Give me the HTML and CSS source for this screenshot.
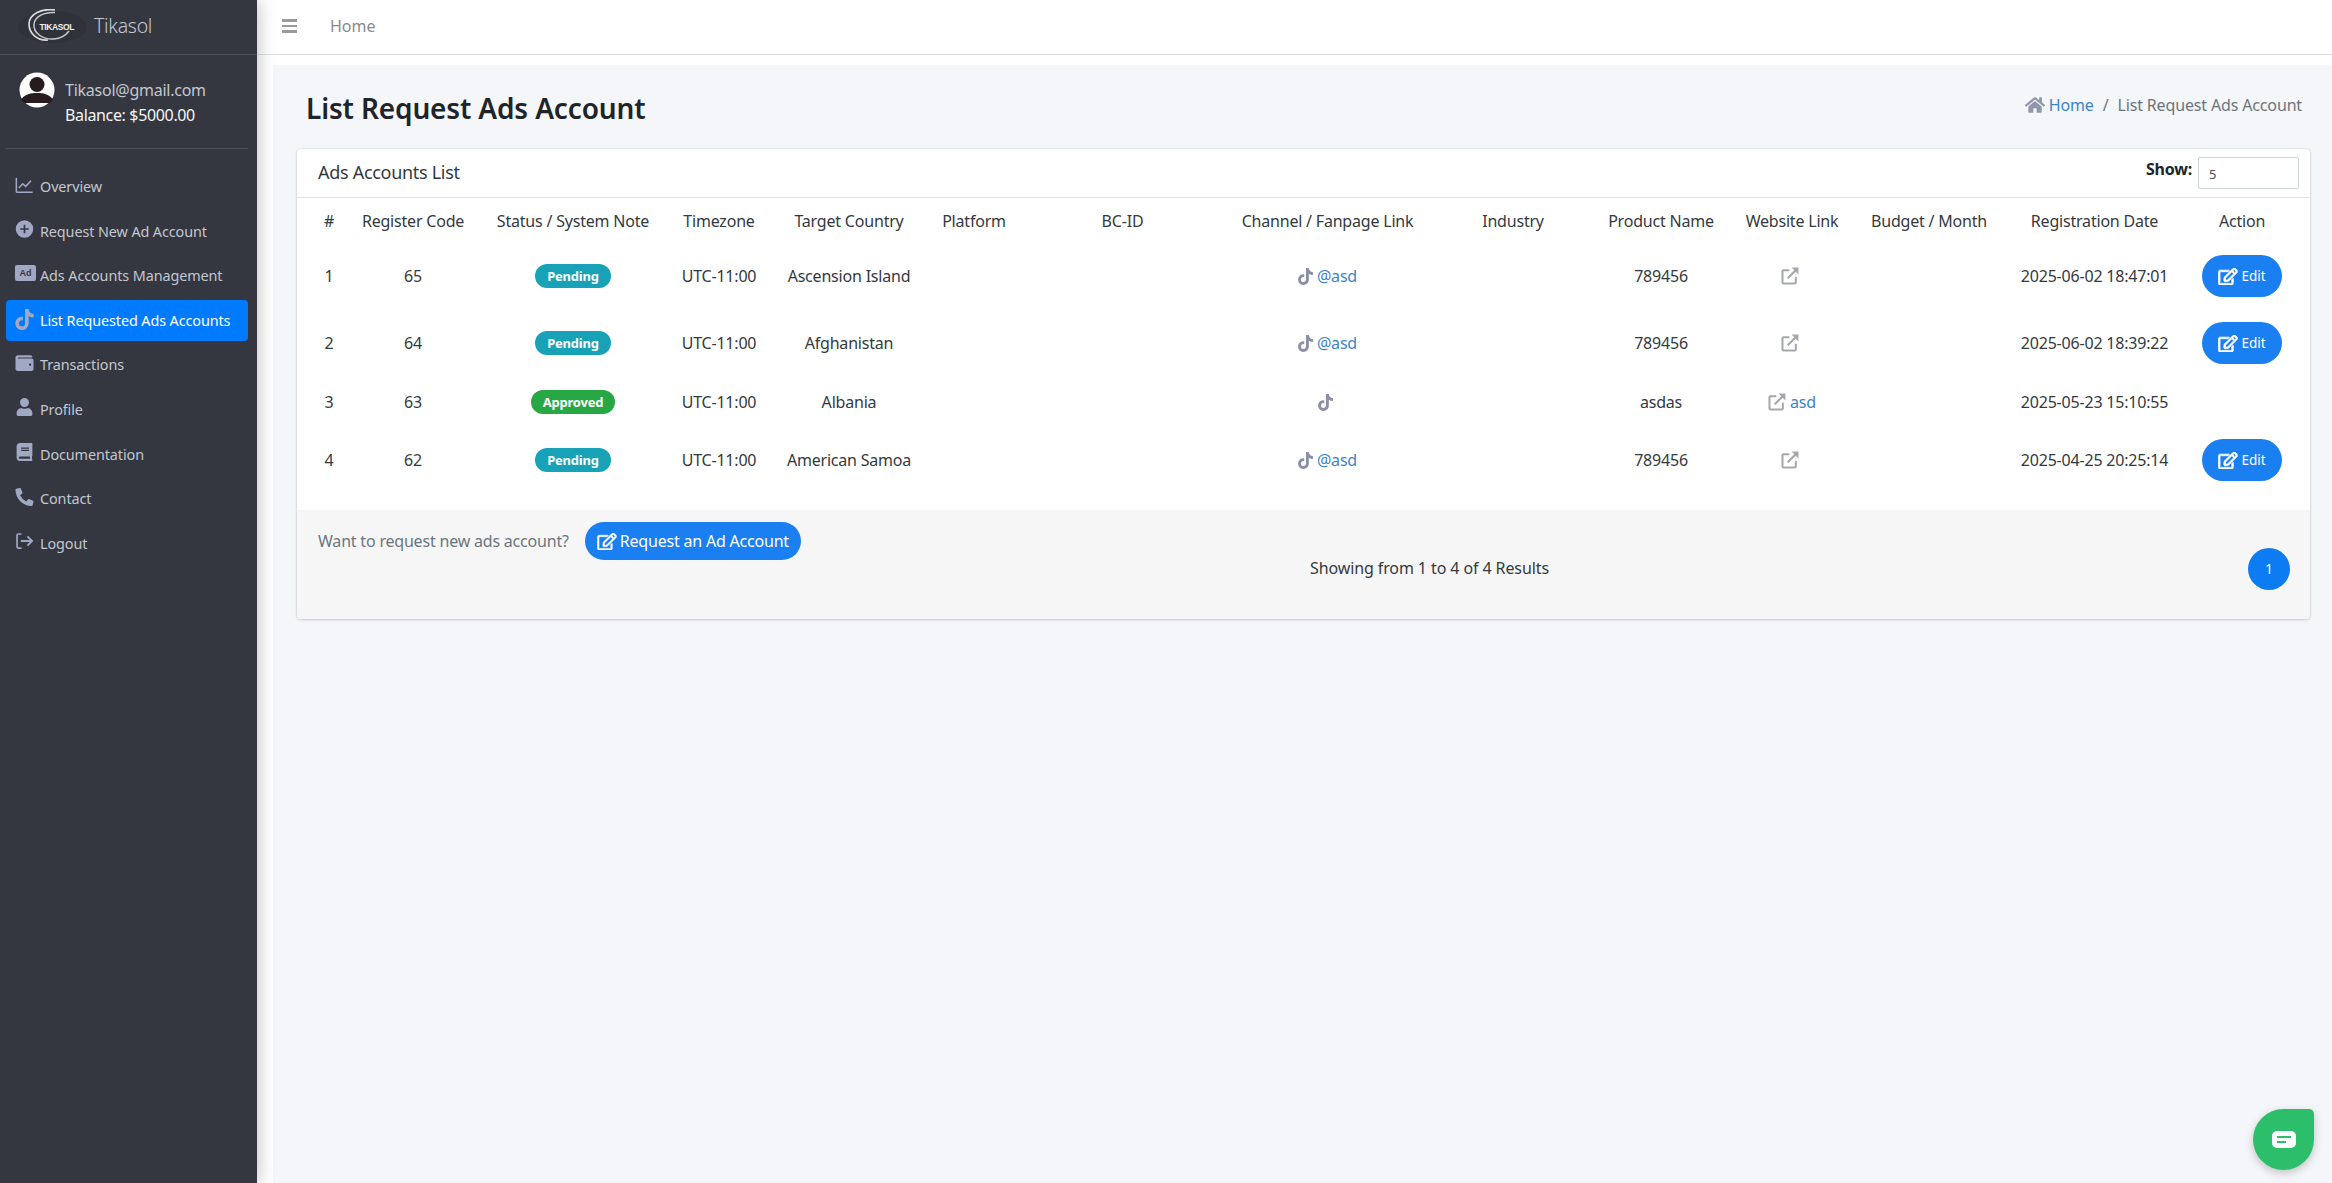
FILE: index.html
```html
<!DOCTYPE html>
<html lang="en">
<head>
<meta charset="utf-8">
<title>List Request Ads Account</title>
<link rel="stylesheet" href="styles.css">
</head>
<body>
<svg class="sprite" xmlns="http://www.w3.org/2000/svg">
  <symbol id="i-chart" viewBox="0 0 512 512"><path d="M24 48v392a24 24 0 0 0 24 24h440" fill="none" stroke="currentColor" stroke-width="44"/><path d="M96 340l110-120 84 74 150-160" fill="none" stroke="currentColor" stroke-width="44"/></symbol>
  <symbol id="i-plus" viewBox="0 0 512 512"><path fill-rule="evenodd" d="M256 8a248 248 0 1 0 0 496 248 248 0 0 0 0-496zM232 136h48v96h96v48h-96v96h-48v-96h-96v-48h96z" fill="currentColor"/></symbol>
  <symbol id="i-tiktok" viewBox="0 0 448 512"><path fill="currentColor" d="M448,209.91a210.06,210.06,0,0,1-122.77-39.25V349.38A162.55,162.55,0,1,1,185,188.31V278.2a74.62,74.62,0,1,0,52.23,71.18V0l88,0a121.18,121.18,0,0,0,1.86,22.17h0A122.18,122.18,0,0,0,381,102.39a121.43,121.43,0,0,0,67,20.14Z"/></symbol>
  <symbol id="i-wallet" viewBox="0 0 512 512"><path fill="currentColor" d="M461.2 128H80c-8.84 0-16-7.16-16-16s7.16-16 16-16h384c8.84 0 16-7.16 16-16 0-26.51-21.49-48-48-48H64C28.65 32 0 60.65 0 96v320c0 35.35 28.65 64 64 64h397.2c28.02 0 50.8-21.53 50.8-48V176c0-26.47-22.78-48-50.8-48zM416 336c-17.67 0-32-14.33-32-32s14.33-32 32-32 32 14.33 32 32-14.33 32-32 32z"/></symbol>
  <symbol id="i-user" viewBox="0 0 448 512"><path fill="currentColor" d="M224 256c70.7 0 128-57.3 128-128S294.7 0 224 0 96 57.3 96 128s57.3 128 128 128zm89.6 32h-16.7c-22.2 10.2-46.9 16-72.9 16s-50.6-5.8-72.9-16h-16.7C60.2 288 0 348.2 0 422.4V464c0 26.5 21.5 48 48 48h352c26.5 0 48-21.5 48-48v-41.6c0-74.2-60.2-134.4-134.4-134.4z"/></symbol>
  <symbol id="i-book" viewBox="0 0 448 512"><path fill="currentColor" d="M448 360V24c0-13.3-10.7-24-24-24H96C43 0 0 43 0 96v320c0 53 43 96 96 96h328c13.3 0 24-10.7 24-24v-16c0-7.5-3.5-14.3-8.9-18.7-4.2-15.4-4.2-59.3 0-74.7 5.4-4.3 8.9-11.1 8.9-18.6zM128 134c0-3.3 2.7-6 6-6h212c3.3 0 6 2.7 6 6v20c0 3.3-2.7 6-6 6H134c-3.3 0-6-2.7-6-6v-20zm0 64c0-3.3 2.7-6 6-6h212c3.3 0 6 2.7 6 6v20c0 3.3-2.7 6-6 6H134c-3.3 0-6-2.7-6-6v-20zm253.4 250H96c-17.7 0-32-14.3-32-32 0-17.6 14.4-32 32-32h285.4c-1.9 17.1-1.9 46.9 0 64z"/></symbol>
  <symbol id="i-phone" viewBox="0 0 512 512"><path fill="currentColor" d="M497.39 361.8l-112-48a24 24 0 0 0-28 6.9l-49.6 60.6A370.66 370.66 0 0 1 130.6 204.11l60.6-49.6a23.94 23.94 0 0 0 6.9-28l-48-112A24.16 24.16 0 0 0 122.6.61l-104 24A24 24 0 0 0 0 48c0 256.5 207.9 464 464 464a24 24 0 0 0 23.4-18.6l24-104a24.29 24.29 0 0 0-14.01-27.6z"/></symbol>
  <symbol id="i-logout" viewBox="0 0 512 512"><path d="M170 56H80a36 36 0 0 0-36 36v328a36 36 0 0 0 36 36h90" fill="none" stroke="currentColor" stroke-width="48"/><path d="M152 256h320M340 124l132 132-132 132" fill="none" stroke="currentColor" stroke-width="52"/></symbol>
  <symbol id="i-home" viewBox="0 0 576 512"><path fill="currentColor" d="M280.37 148.26L96 300.11V464a16 16 0 0 0 16 16l112.06-.29a16 16 0 0 0 15.92-16V368a16 16 0 0 1 16-16h64a16 16 0 0 1 16 16v95.64a16 16 0 0 0 16 16.05L464 480a16 16 0 0 0 16-16V300L295.67 148.26a12.19 12.19 0 0 0-15.3 0zM571.6 251.47L488 182.56V44.05a12 12 0 0 0-12-12h-56a12 12 0 0 0-12 12v72.61L318.47 43a48 48 0 0 0-61 0L4.34 251.47a12 12 0 0 0-1.6 16.9l25.5 31A12 12 0 0 0 45.15 301l235.22-193.74a12.19 12.19 0 0 1 15.3 0L530.9 301a12 12 0 0 0 16.9-1.6l25.5-31a12 12 0 0 0-1.7-16.93z"/></symbol>
  <symbol id="i-edit" viewBox="0 0 576 512"><path fill="currentColor" d="M402.3 344.9l32-32c5-5 13.7-1.5 13.7 5.7V464c0 26.5-21.5 48-48 48H48c-26.5 0-48-21.5-48-48V112c0-26.5 21.5-48 48-48h273.5c7.1 0 10.7 8.6 5.7 13.7l-32 32c-1.5 1.5-3.5 2.3-5.7 2.3H48v352h352V350.5c0-2.1.8-4.1 2.3-5.6zm156.6-201.8L296.3 405.7l-90.4 10c-26.2 2.9-48.5-19.2-45.6-45.6l10-90.4L432.9 17.1c22.9-22.9 59.9-22.9 82.7 0l43.2 43.2c22.9 22.9 22.9 60 .1 82.8zM460.1 174L402 115.9 216.2 301.8l-7.3 65.3 65.3-7.3L460.1 174zm64.8-79.7l-43.2-43.2c-4.1-4.1-10.8-4.1-14.8 0L436 82l58.1 58.1 30.9-30.9c4-4.2 4-10.8-.1-14.9z"/></symbol>
  <symbol id="i-ext" viewBox="0 0 512 512"><path d="M236 90H70a28 28 0 0 0-28 28v324a28 28 0 0 0 28 28h324a28 28 0 0 0 28-28V276" fill="none" stroke="currentColor" stroke-width="58"/><path d="M190 322L440 72" fill="none" stroke="currentColor" stroke-width="58"/><path fill="currentColor" d="M300 16h196v196z"/></symbol>
</svg>

<div class="layout">
  <aside class="sidebar">
    <div class="brand">
      <svg class="logo" viewBox="0 0 70 36" aria-hidden="true">
        <ellipse cx="34.500" cy="18" rx="34.500" ry="16" fill="#30323a"/>
        <path d="M37 1C24-1 11 5 11 15c0 10 9 17 19 16" fill="none" stroke="#d8dadd" stroke-width="1.700"/>
        <path d="M37 3.500C25 3 17 8 16 15c-1 9 9 16 20 15 7-.5 12-4 15-8" fill="none" stroke="#c6c8cd" stroke-width="1.500"/>
        <text class="logo-text" x="21.500" y="20.500" textLength="35">TIKASOL</text>
      </svg>
      <span class="brand-name">Tikasol</span>
    </div>
    <div class="user-panel">
      <svg class="avatar" viewBox="0 0 36 36" aria-hidden="true">
        <circle cx="18" cy="18" r="17.500" fill="#fdfdfd"/>
        <circle cx="18" cy="12.500" r="7.500" fill="#281b1e"/>
        <path d="M2 27.500c4-5.500 10-6.500 16-6.500s12 1 16 6.500c-1 1.500-2 2.500-3.500 3.500h-25C4 30 3 29 2 27.500z" fill="#281b1e"/>
      </svg>
      <div class="user-info">
        <div class="user-mail">Tikasol@gmail.com</div>
        <div class="user-balance">Balance: $5000.00</div>
      </div>
    </div>
    <nav class="nav">
      <a class="nav-link"><svg class="nav-icon"><use href="#i-chart"/></svg>Overview</a>
      <a class="nav-link"><svg class="nav-icon"><use href="#i-plus"/></svg>Request New Ad Account</a>
      <a class="nav-link"><span class="ad-icon">Ad</span>Ads Accounts Management</a>
      <a class="nav-link active"><svg class="nav-icon tall"><use href="#i-tiktok"/></svg>List Requested Ads Accounts</a>
      <a class="nav-link"><svg class="nav-icon"><use href="#i-wallet"/></svg>Transactions</a>
      <a class="nav-link"><svg class="nav-icon"><use href="#i-user"/></svg>Profile</a>
      <a class="nav-link"><svg class="nav-icon"><use href="#i-book"/></svg>Documentation</a>
      <a class="nav-link"><svg class="nav-icon"><use href="#i-phone"/></svg>Contact</a>
      <a class="nav-link"><svg class="nav-icon"><use href="#i-logout"/></svg>Logout</a>
    </nav>
  </aside>

  <div class="main">
    <header class="topbar">
      <span class="burger"><span></span><span></span><span></span></span>
      <a class="top-link">Home</a>
    </header>
    <main class="content">
      <div class="page-head">
        <h1 class="page-title">List Request Ads Account</h1>
        <div class="crumbs">
          <svg class="crumb-home"><use href="#i-home"/></svg>
          <a class="crumb-link">Home</a>
          <span class="crumb-sep">/</span>
          <span>List Request Ads Account</span>
        </div>
      </div>

      <section class="card">
        <div class="card-head">
          <span class="card-title">Ads Accounts List</span>
          <label class="show"><span class="show-label">Show:</span><input class="show-input" value="5"></label>
        </div>
        <div class="card-body">
          <table class="table">
            <colgroup>
              <col class="c1"><col class="c2"><col class="c3"><col class="c4"><col class="c5"><col class="c6"><col class="c7"><col class="c8"><col class="c9"><col class="c10"><col class="c11"><col class="c12"><col class="c13"><col class="c14">
            </colgroup>
            <thead>
              <tr><th>#</th><th>Register Code</th><th>Status / System Note</th><th>Timezone</th><th>Target Country</th><th>Platform</th><th>BC-ID</th><th>Channel / Fanpage Link</th><th>Industry</th><th>Product Name</th><th>Website Link</th><th>Budget / Month</th><th>Registration Date</th><th>Action</th></tr>
            </thead>
            <tbody>
              <tr class="row-first">
                <td>1</td><td>65</td><td><span class="badge info">Pending</span></td><td>UTC-11:00</td><td>Ascension Island</td><td></td><td></td>
                <td><svg class="tk"><use href="#i-tiktok"/></svg> <a class="link">@asd</a></td><td></td><td>789456</td>
                <td><svg class="ext"><use href="#i-ext"/></svg>&nbsp;</td><td></td><td>2025-06-02 18:47:01</td>
                <td><a class="btn-edit"><svg class="edit-ic"><use href="#i-edit"/></svg>Edit</a></td>
              </tr>
              <tr>
                <td>2</td><td>64</td><td><span class="badge info">Pending</span></td><td>UTC-11:00</td><td>Afghanistan</td><td></td><td></td>
                <td><svg class="tk"><use href="#i-tiktok"/></svg> <a class="link">@asd</a></td><td></td><td>789456</td>
                <td><svg class="ext"><use href="#i-ext"/></svg>&nbsp;</td><td></td><td>2025-06-02 18:39:22</td>
                <td><a class="btn-edit"><svg class="edit-ic"><use href="#i-edit"/></svg>Edit</a></td>
              </tr>
              <tr class="row-slim">
                <td>3</td><td>63</td><td><span class="badge ok">Approved</span></td><td>UTC-11:00</td><td>Albania</td><td></td><td></td>
                <td><svg class="tk"><use href="#i-tiktok"/></svg>&nbsp;</td><td></td><td>asdas</td>
                <td><svg class="ext"><use href="#i-ext"/></svg> <a class="link">asd</a></td><td></td><td>2025-05-23 15:10:55</td>
                <td></td>
              </tr>
              <tr>
                <td>4</td><td>62</td><td><span class="badge info">Pending</span></td><td>UTC-11:00</td><td>American Samoa</td><td></td><td></td>
                <td><svg class="tk"><use href="#i-tiktok"/></svg> <a class="link">@asd</a></td><td></td><td>789456</td>
                <td><svg class="ext"><use href="#i-ext"/></svg>&nbsp;</td><td></td><td>2025-04-25 20:25:14</td>
                <td><a class="btn-edit"><svg class="edit-ic"><use href="#i-edit"/></svg>Edit</a></td>
              </tr>
            </tbody>
          </table>
        </div>
        <div class="card-foot">
          <div class="foot-left">
            <span class="foot-q">Want to request new ads account?</span>
            <a class="btn-request"><svg class="req-ic"><use href="#i-edit"/></svg>Request an Ad Account</a>
          </div>
          <div class="foot-info">Showing from 1 to 4 of 4 Results</div>
          <a class="page-num">1</a>
        </div>
      </section>
    </main>
  </div>
</div>

<a class="chat" aria-label="Chat">
  <svg class="chat-ic" viewBox="0 0 24 18" aria-hidden="true">
    <path fill="#fff" d="M5 0h14a5 5 0 0 1 5 5v7a5 5 0 0 1-5 5H5a5 5 0 0 1-5-5V5a5 5 0 0 1 5-5z"/>
    <path d="M5 6h14M5 11h9" stroke="#2dbe6c" stroke-width="1.800"/>
  </svg>
</a>
</body>
</html>
```
FILE: styles.css
```css
* { box-sizing: border-box; }
html, body { margin: 0; height: 100%; }
body {
  font-family: "Noto Sans", "Open Sans", sans-serif;
  font-size: 15px;
  color: #343a40;
  background: #fff;
  overflow: hidden;
}
.sprite { display: none; }
.layout { display: flex; height: 100vh; }

/* Sidebar */
.sidebar {
  flex: 0 0 257px;
  background: #343740;
  color: #c2c7d0;
  box-shadow: 0 0 18px rgba(0,0,0,.28);
  position: relative;
  z-index: 2;
}
.brand {
  height: 55px;
  display: flex;
  align-items: center;
  padding: 0 0 3px 18px;
  border-bottom: 1px solid #4b4f58;
}
.logo { width: 70px; height: 36px; flex: none; margin-top: 3px; }
.logo-text { font: 700 8.500px "Liberation Sans", sans-serif; fill: #f0f0f0; }
.brand-name { margin-left: 6px; font-size: 19.500px; font-weight: 300; color: #c2c7d0; letter-spacing: -.3px; }
.user-panel {
  display: flex;
  align-items: flex-start;
  gap: 10px;
  margin: 0 9px 0 6px;
  padding: 17px 0 0 13px;
  height: 94px;
  border-bottom: 1px solid #4b4f58;
}
.avatar { width: 36px; height: 36px; flex: none; }
.user-info { padding-top: 6px; }
.user-mail { font-size: 16px; line-height: 25px; color: #c2c7d0; letter-spacing: -.25px; }
.user-balance { font-size: 16px; line-height: 25px; color: #f4f5f6; letter-spacing: -.35px; }
.nav { display: flex; flex-direction: column; gap: 3.600px; padding: 17px 9px 0 6px; }
.nav-link {
  display: flex;
  align-items: center;
  height: 41px;
  padding: 0 0 0 9px;
  font-size: 14.400px;
  color: #c2c7d0;
  border-radius: 4px;
  letter-spacing: -.1px;
}
.nav-link.active { background: #007bff; color: #fff; }
.nav-icon { width: 19px; height: 18px; margin-right: 6px; flex: none; color: #a1a8c3; margin-top: -4px; }
.nav-icon.tall { height: 21px; margin-top: -2px; }
.ad-icon {
  width: 21px; height: 16px; margin-right: 4px; flex: none;
  margin-top: -5px;
  background: #a1a8c3; color: #343740; border-radius: 2px;
  font: 700 9px/16px "Liberation Sans", sans-serif; text-align: center;
}

/* Main */
.main { flex: 1; display: flex; flex-direction: column; min-width: 0; }
.topbar {
  height: 55px;
  display: flex;
  align-items: center;
  padding: 0 0 2px 25px;
  background: #fff;
  border-bottom: 1px solid #dee2e6;
  flex: none;
}
.burger { display: flex; flex-direction: column; gap: 3px; width: 15px; }
.burger span { height: 2.500px; background: #9a9a9a; }
.top-link { margin-left: 33px; font-size: 16px; color: #868b90; }
.content {
  flex: 1;
  margin: 10px 0 0 16px;
  background: #f4f6f9;
  padding: 0 22px 0 24px;
}
.page-head {
  display: flex;
  justify-content: space-between;
  align-items: center;
  height: 84px;
  padding: 0 8px 0 9px;
}
.page-title { margin: 2px 0 0; font-size: 28px; font-weight: 600; color: #1f2429; letter-spacing: -.15px; }
.crumbs { display: flex; align-items: center; font-size: 16px; color: #6c757d; margin-top: -5px; letter-spacing: -.15px; }
.crumb-home { width: 20px; height: 18px; color: #9097ad; margin-right: 4px; }
.crumb-link { color: #3d84c6; }
.crumb-sep { margin: 0 9px; }

/* Card */
.card {
  background: #fff;
  border-radius: 4px;
  box-shadow: 0 0 2px rgba(0,0,0,.18), 0 1px 3px rgba(0,0,0,.12);
  overflow: hidden;
}
.card-head {
  height: 49px;
  display: flex;
  align-items: center;
  justify-content: space-between;
  padding: 0 11px 0 21px;
  border-bottom: 1px solid #dfe2e6;
}
.card-title { font-size: 18px; color: #343a40; letter-spacing: -.3px; margin-bottom: 2px; }
.show { display: flex; align-items: center; font-weight: 700; font-size: 16px; color: #212529; gap: 6px; letter-spacing: -.2px; }
.show-label { margin-bottom: 8px; }
.show-input {
  width: 101px; height: 32px;
  border: 1px solid #ced4da;
  border-radius: 2px;
  padding: 2px 10px 0;
  font: 400 13px "Noto Sans", sans-serif;
  color: #495057;
  background: #fff;
}
.card-body { padding: 0 0 17px 16px; }
.table { width: 1985px; table-layout: fixed; border-collapse: collapse; font-size: 16px; letter-spacing: -.2px; }
.c1 { width: 32px; } .c2 { width: 136px; } .c3 { width: 184px; } .c4 { width: 108px; }
.c5 { width: 152px; } .c6 { width: 98px; } .c7 { width: 199px; } .c8 { width: 211px; }
.c9 { width: 160px; } .c10 { width: 136px; } .c11 { width: 126px; } .c12 { width: 148px; }
.c13 { width: 183px; } .c14 { width: 112px; }
.table th { height: 45px; padding: 0; font-weight: 400; text-align: center; color: #343a40; }
.table td { height: 51px; padding: 12px 0; text-align: center; color: #343a40; }
.table .row-first td { padding-bottom: 13px; }
.table .row-slim td { padding-bottom: 11px; }
.badge {
  display: inline-block;
  height: 24px;
  padding: 0 12px;
  border-radius: 12px;
  font-size: 13px;
  line-height: 24px;
  font-weight: 700;
  color: #fff;
  letter-spacing: -.2px;
}
.badge.info { background: #17a2b8; }
.badge.ok { background: #28a745; }
.link { color: #3d84c6; }
.tk { width: 15px; height: 17px; color: #8b90a4; vertical-align: -3px; }
.ext { width: 18px; height: 18px; color: #a4a7ae; vertical-align: -3px; }
.btn-edit {
  display: inline-flex;
  align-items: center;
  justify-content: center;
  width: 80px;
  height: 42px;
  border-radius: 21px;
  background: #1a7ff0;
  color: #fff;
  font-size: 13.500px;
  letter-spacing: 0;
  vertical-align: middle;
}
.edit-ic { width: 20px; height: 17px; margin-right: 3px; stroke: currentColor; stroke-width: 22; }

/* Footer */
.card-foot {
  height: 109px;
  display: flex;
  align-items: flex-start;
  padding: 12px 20px 0 21px;
  background: #f6f6f7;
}
.foot-left { display: flex; align-items: center; gap: 16px; flex: none; }
.foot-q { color: #6c757d; font-size: 16px; letter-spacing: -.2px; }
.btn-request {
  display: inline-flex;
  align-items: center;
  height: 38px;
  padding: 0 12px;
  border-radius: 19px;
  background: #1a7ff0;
  color: #fff;
  font-size: 16px;
  letter-spacing: -.2px;
}
.req-ic { width: 20px; height: 17px; margin-right: 3px; stroke: currentColor; stroke-width: 14; }
.foot-info { flex: 1; text-align: center; margin-top: 35px; padding-right: 190px; font-size: 16px; letter-spacing: -.1px; color: #343a40; }
.page-num {
  flex: none;
  width: 42px; height: 42px;
  margin-top: 26px;
  border-radius: 50%;
  background: #0d7bf2;
  color: #fff;
  font-size: 14px;
  line-height: 42px;
  text-align: center;
}

/* Chat widget */
.chat {
  position: fixed;
  right: 18px;
  bottom: 13px;
  width: 61px;
  height: 61px;
  background: #2dbe6c;
  border-radius: 50% 5px 50% 50%;
  box-shadow: 0 3px 8px rgba(0,0,0,.22);
  display: flex;
  align-items: center;
  justify-content: center;
}
.chat-ic { width: 24px; height: 18px; }
```
